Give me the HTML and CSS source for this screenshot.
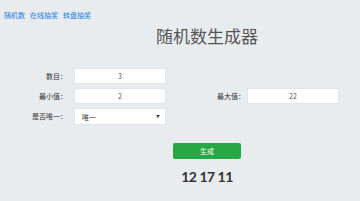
FILE: index.html
```html
<!DOCTYPE html>
<html lang="zh-CN">

<head>
    <meta charset="UTF-8">
    <meta name="viewport" content="width=device-width, initial-scale=1.0">
    <title>随机数生成器</title>
    <link rel="stylesheet" href="styles.css">
</head>

<body>
    <div class="nav">
        <a href="#">随机数</a>
        <a href="#">在线抽奖</a>
        <a href="#">转盘抽奖</a>
    </div>
    <div class="title">随机数生成器</div>
    <div class="form">
        <label>数目：</label>
        <input type="text" value="3">
        <span></span>
        <span></span>
        <label>最小值：</label>
        <input type="text" value="2">
        <label class="label-right">最大值：</label>
        <input type="text" value="22">
        <label>是否唯一：</label>
        <div class="select">
            <span>唯一</span>
            <i class="arrow"></i>
        </div>
    </div>
    <div class="action">
        <a href="#" class="btn">生成</a>
        <div class="result">12 17 11</div>
    </div>
</body>

</html>
```

FILE: styles.css
```css
* {
    padding: 0;
    margin: 0;
    box-sizing: border-box;
}

body {
    width: 360px;
    height: 201px;
    overflow: hidden;
    background-color: #e9ecef;
    font-family: "Noto Sans CJK SC", "Noto Sans", sans-serif;
    color: #333;
}

a {
    text-decoration: none;
}

.nav {
    display: flex;
    gap: 5px;
    padding: 10px 0 0 4px;
    height: 26px;
    font-size: 7px;
    line-height: 10px;
}

.nav a {
    color: #1a7ee0;
}

.title {
    padding-left: 54px;
    height: 30px;
    font-size: 17px;
    line-height: 20px;
    color: #555;
    text-align: center;
}

.form {
    display: grid;
    grid-template-columns: 74px 92px 81px 92px;
    grid-auto-rows: 16px;
    row-gap: 4px;
    margin-top: 12px;
    font-size: 7px;
}

.form label {
    padding-right: 7px;
    text-align: right;
    line-height: 16px;
    color: #333;
}

.form .label-right {
    padding-right: 2px;
}

.form input {
    width: 92px;
    height: 16px;
    border: 1px solid #e1e4e8;
    background: #fff;
    text-align: center;
    font-family: "Noto Sans CJK SC", sans-serif;
    font-size: 7px;
    color: #555;
    outline: none;
}

.select {
    display: flex;
    align-items: center;
    justify-content: space-between;
    height: 17px;
    padding: 0 5px 0 7px;
    background: #fff;
    border: 1px solid #e1e4e8;
    color: #333;
}

.arrow {
    width: 0;
    height: 0;
    border-left: 2px solid transparent;
    border-right: 2px solid transparent;
    border-top: 3px solid #444;
}

.action {
    display: flex;
    flex-direction: column;
    align-items: center;
    padding-left: 54px;
    margin-top: 19px;
}

.btn {
    width: 68px;
    height: 16px;
    line-height: 16px;
    text-align: center;
    font-size: 7px;
    color: #fff;
    background-color: #28a745;
    border-radius: 2px;
}

.result {
    margin-top: 9px;
    font-family: Lato, "Open Sans", sans-serif;
    font-weight: 700;
    font-size: 14px;
    letter-spacing: -0.5px;
    line-height: 18px;
    color: #333;
}
```
